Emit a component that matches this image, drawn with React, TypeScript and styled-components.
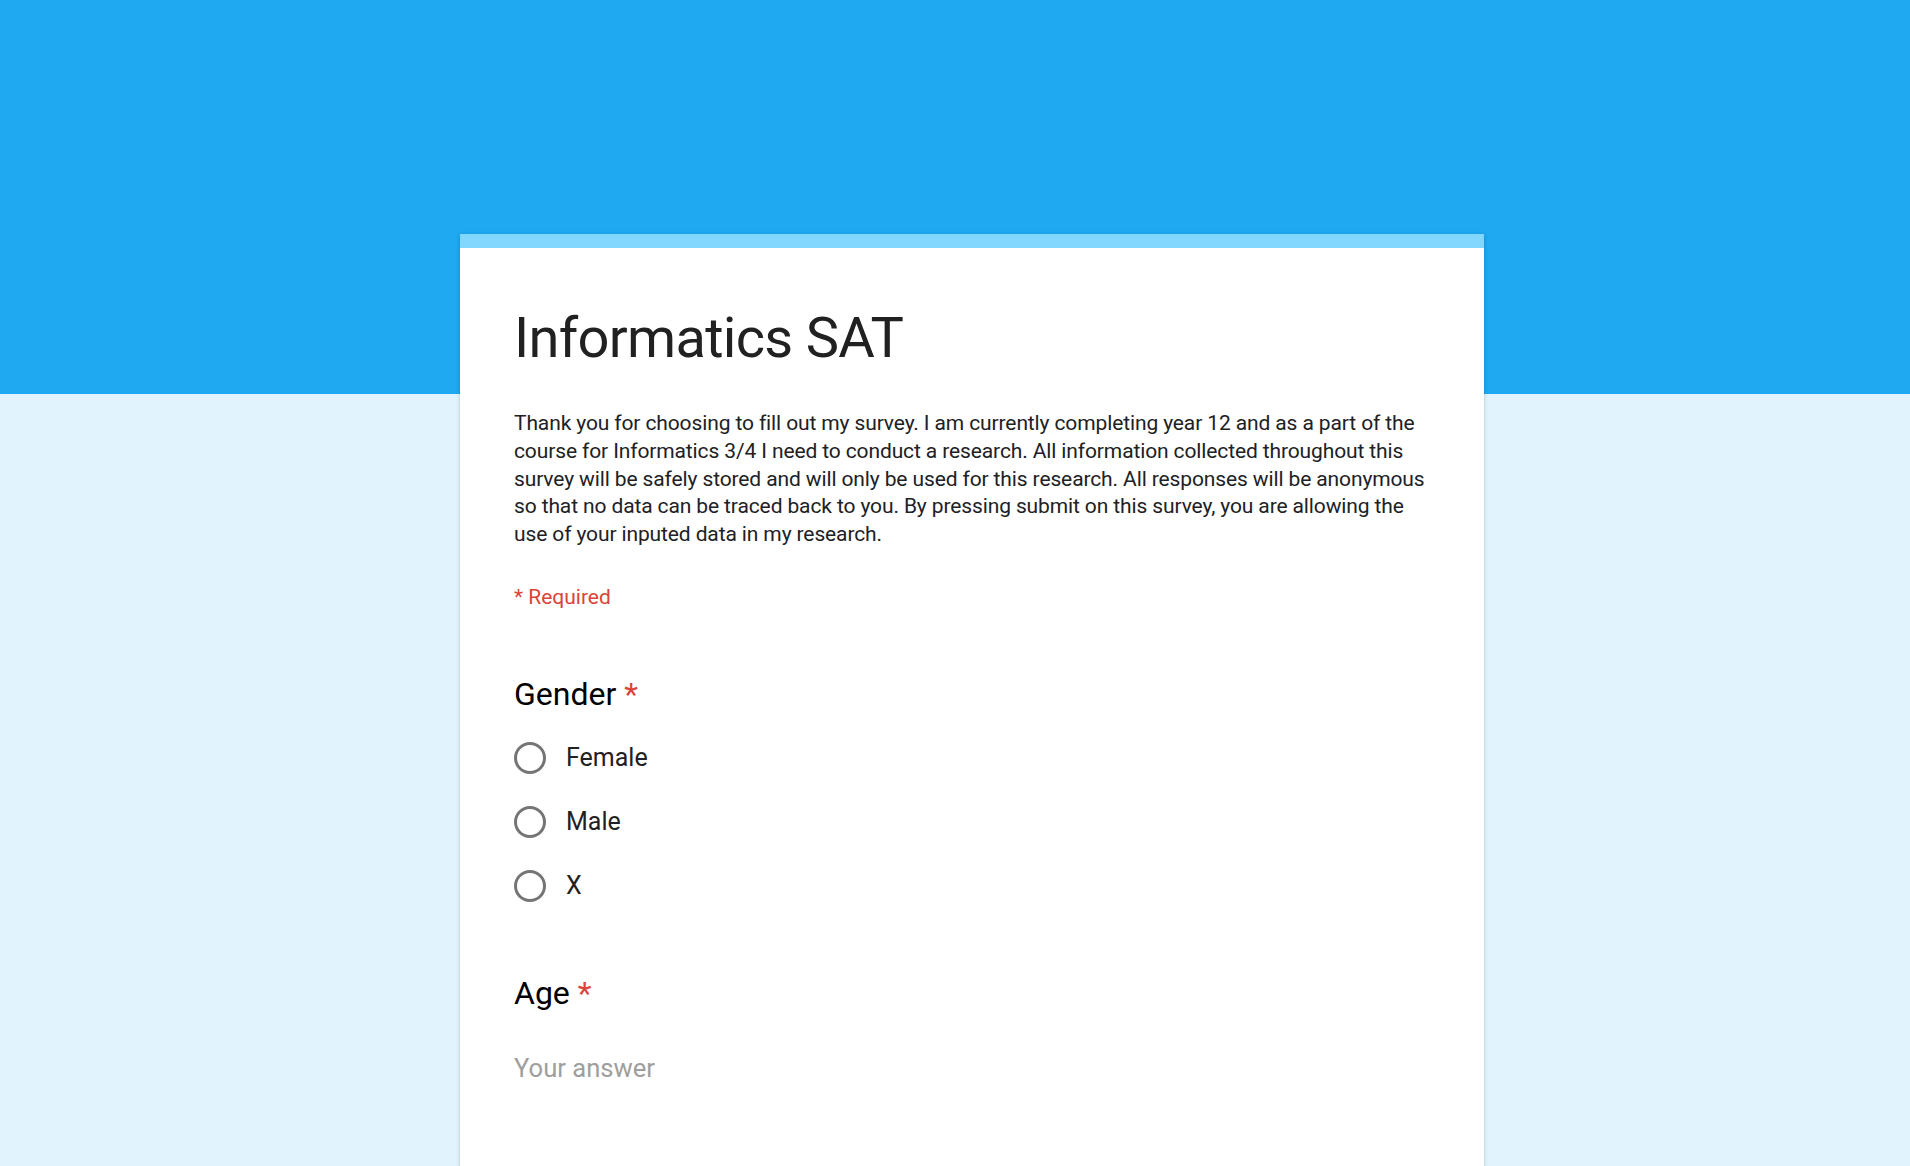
import React from "react";
import styled, { createGlobalStyle } from "styled-components";

const GlobalStyle = createGlobalStyle`
  html, body {
    margin: 0;
    padding: 0;
    overflow: hidden;
  }
  body {
    font-family: Roboto, "Noto Sans", Arial, sans-serif;
    background: #e1f3fd;
  }
`;

const Page = styled.div`
  min-height: 1166px;
  background: linear-gradient(to bottom, #1ea9f1 0, #1ea9f1 394px, #e1f3fd 394px);
  padding-top: 234px;
  padding-left: 460px;
  box-sizing: border-box;
`;

const Card = styled.div`
  width: 1024px;
  min-height: 932px;
  box-sizing: border-box;
  background: #ffffff;
  border-top: 14px solid #81d7fd;
  box-shadow: 0 2px 2px rgba(0, 0, 0, 0.14), 0 1px 5px rgba(0, 0, 0, 0.12), 0 3px 1px -2px rgba(0, 0, 0, 0.2);
  padding: 56px 54px 40px 54px;
  display: flex;
  flex-direction: column;
`;

const Title = styled.h1`
  margin: 0;
  font-family: Roboto, Arial, sans-serif;
  font-weight: 400;
  font-size: 56px;
  line-height: 68px;
  letter-spacing: -0.7px;
  color: #212121;
`;

const Description = styled.p`
  margin: 38px 0 0 0;
  font-size: 21px;
  line-height: 27.75px;
  letter-spacing: -0.12px;
  color: #202124;
`;

const RequiredNote = styled.div`
  margin-top: 34px;
  font-size: 21px;
  line-height: 28px;
  color: #db4437;
`;

const QuestionTitle = styled.div<{ $gap: number }>`
  margin-top: ${(p) => p.$gap}px;
  font-size: 32px;
  line-height: 38px;
  color: #000000;
`;

const Asterisk = styled.span`
  color: #db4437;
  margin-left: 8px;
`;

const Options = styled.div`
  margin-top: 13px;
  display: flex;
  flex-direction: column;
`;

const OptionRow = styled.label`
  height: 64px;
  display: flex;
  align-items: center;
  gap: 20px;
  cursor: pointer;
`;

const RadioCircle = styled.span`
  width: 32px;
  height: 32px;
  box-sizing: border-box;
  border: 3.3px solid #757575;
  border-radius: 50%;
  flex-shrink: 0;
`;

const OptionLabel = styled.span`
  font-size: 25px;
  line-height: 30px;
  color: #212121;
`;

const AnswerPlaceholder = styled.div`
  margin-top: 41px;
  font-size: 25.6px;
  line-height: 30px;
  color: #9e9e9e;
`;

const genderOptions = ["Female", "Male", "X"];

export default function App() {
  return (
    <>
      <GlobalStyle />
      <Page>
        <Card>
          <Title>Informatics SAT</Title>
          <Description>
            Thank you for choosing to fill out my survey. I am currently completing year 12 and as a part of the
            course for Informatics 3/4 I need to conduct a research. All information collected throughout this
            survey will be safely stored and will only be used for this research. All responses will be anonymous
            so that no data can be traced back to you. By pressing submit on this survey, you are allowing the
            use of your inputed data in my research.
          </Description>
          <RequiredNote>* Required</RequiredNote>
          <QuestionTitle $gap={64}>
            Gender<Asterisk>*</Asterisk>
          </QuestionTitle>
          <Options>
            {genderOptions.map((o) => (
              <OptionRow key={o}>
                <RadioCircle />
                <OptionLabel>{o}</OptionLabel>
              </OptionRow>
            ))}
          </Options>
          <QuestionTitle $gap={56}>
            Age<Asterisk>*</Asterisk>
          </QuestionTitle>
          <AnswerPlaceholder>Your answer</AnswerPlaceholder>
        </Card>
      </Page>
    </>
  );
}
